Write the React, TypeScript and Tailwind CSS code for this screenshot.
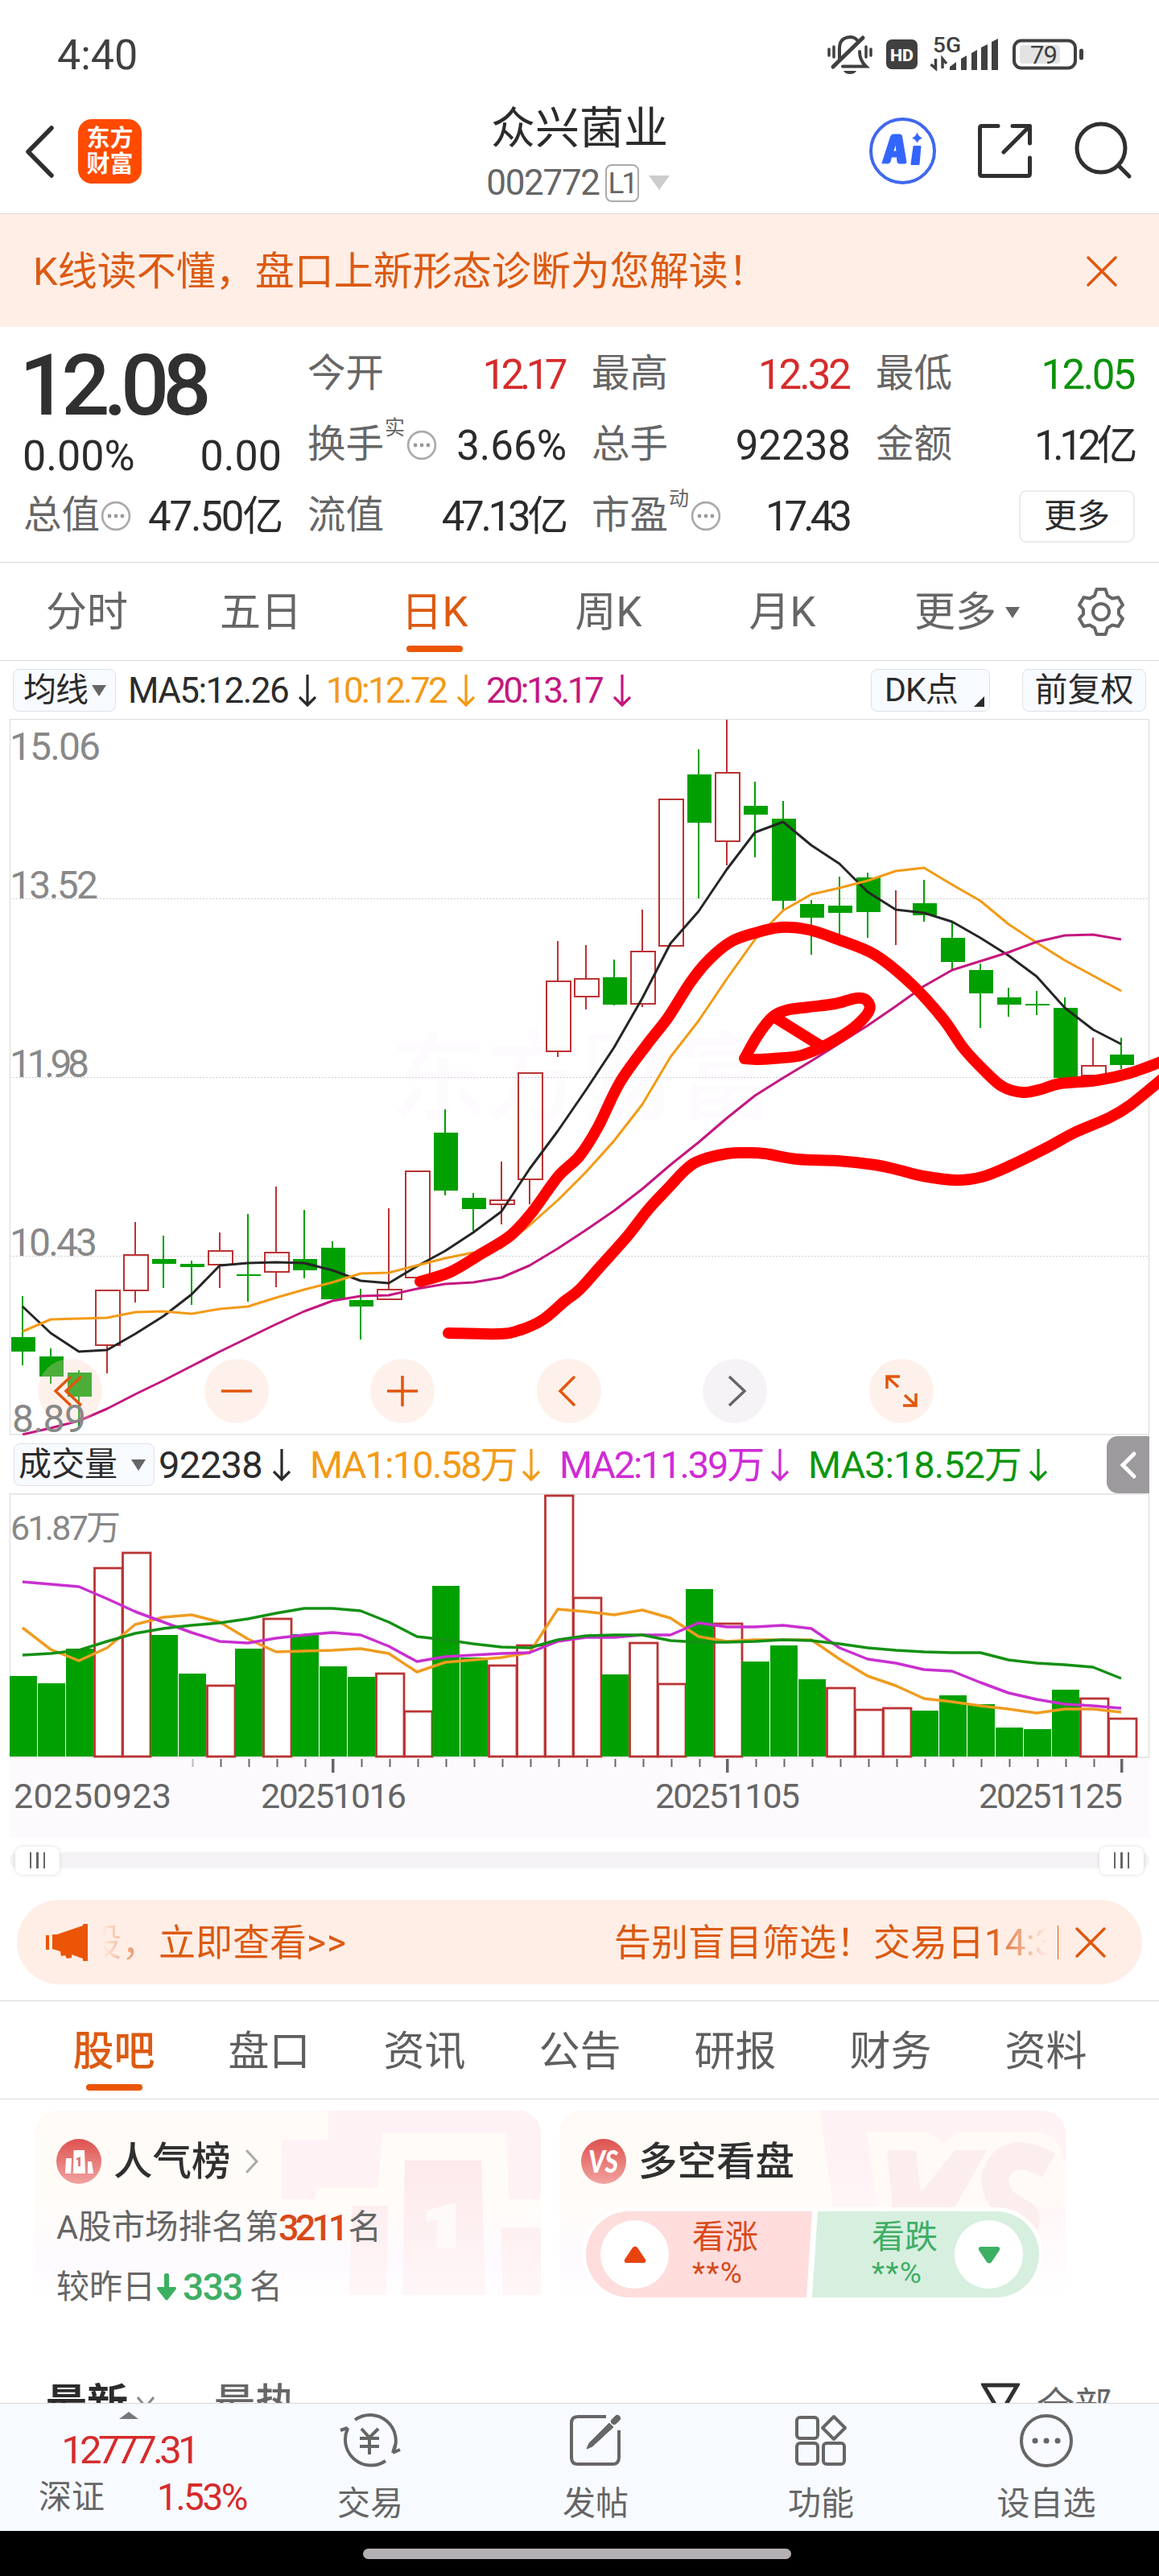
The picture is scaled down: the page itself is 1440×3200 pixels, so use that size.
import type { ReactNode } from "react";

type Candle = [high: number, top: number, bottom: number, low: number, up: 0 | 1];

const STEP = 35;
const FIRST_X = 28;
const FONT = "Roboto, 'Noto Sans CJK SC', sans-serif";

const candles: Candle[] = [
  [1610, 1661, 1679, 1696, 0],
  [1675, 1685, 1710, 1719, 0],
  [1702, 1705, 1735, 1773, 0],
  [1603, 1603, 1671, 1706, 1],
  [1518, 1559, 1603, 1618, 1],
  [1535, 1564, 1570, 1600, 0],
  [1566, 1570, 1574, 1621, 0],
  [1531, 1554, 1571, 1600, 1],
  [1508, 1583, 1585, 1617, 0],
  [1474, 1556, 1580, 1599, 1],
  [1503, 1564, 1578, 1588, 0],
  [1542, 1550, 1614, 1614, 0],
  [1601, 1615, 1623, 1664, 0],
  [1501, 1602, 1614, 1614, 1],
  [1455, 1455, 1587, 1587, 1],
  [1378, 1407, 1479, 1485, 0],
  [1482, 1488, 1502, 1529, 0],
  [1443, 1491, 1496, 1521, 1],
  [1333, 1333, 1465, 1496, 1],
  [1169, 1219, 1306, 1313, 1],
  [1174, 1216, 1238, 1254, 1],
  [1192, 1214, 1248, 1249, 0],
  [1130, 1182, 1247, 1251, 1],
  [993, 993, 1175, 1175, 1],
  [931, 962, 1022, 1116, 0],
  [894, 960, 1045, 1075, 1],
  [971, 1001, 1012, 1065, 0],
  [995, 1017, 1119, 1130, 0],
  [1118, 1123, 1140, 1186, 0],
  [1089, 1125, 1134, 1162, 0],
  [1084, 1090, 1133, 1165, 0],
  [1106, 1126, 1126, 1174, 1],
  [1093, 1122, 1137, 1145, 0],
  [1145, 1165, 1195, 1205, 0],
  [1197, 1205, 1234, 1277, 0],
  [1227, 1239, 1248, 1263, 0],
  [1231, 1247, 1249, 1261, 0],
  [1239, 1252, 1339, 1339, 0],
  [1289, 1324, 1336, 1350, 1],
  [1289, 1310, 1323, 1328, 0],
];

const ma5 = [1623, 1656, 1679, 1677, 1657, 1635, 1608, 1572, 1569, 1568, 1569, 1578, 1591, 1594, 1573, 1554, 1531, 1505, 1452, 1405, 1354, 1301, 1240, 1172, 1132, 1080, 1034, 1021, 1050, 1073, 1108, 1130, 1134, 1145, 1165, 1187, 1213, 1252, 1279, 1297];
const ma10 = [1654, 1639, 1638, 1637, 1630, 1629, 1632, 1626, 1623, 1612, 1602, 1593, 1582, 1581, 1572, 1563, 1556, 1550, 1522, 1491, 1456, 1417, 1372, 1313, 1268, 1216, 1167, 1131, 1111, 1103, 1094, 1082, 1078, 1099, 1119, 1148, 1171, 1193, 1212, 1231];
const ma20 = [1782, 1774, 1765, 1750, 1732, 1715, 1697, 1679, 1662, 1645, 1629, 1616, 1610, 1609, 1601, 1595, 1593, 1587, 1572, 1551, 1528, 1504, 1477, 1447, 1419, 1389, 1361, 1339, 1318, 1296, 1274, 1250, 1225, 1205, 1194, 1183, 1170, 1162, 1161, 1167];

const volumes = [2082, 2091, 2048, 1947, 1928, 2031, 2079, 2093, 2048, 2010, 2030, 2070, 2083, 2078, 2125, 1970, 2059, 2068, 2043, 1857, 1984, 2080, 2040, 2091, 1974, 2016, 2064, 2044, 2086, 2096, 2123, 2121, 2125, 2106, 2117, 2146, 2148, 2099, 2109, 2134];
const volumeUp = [3, 4, 7, 9, 13, 14, 17, 18, 19, 20, 22, 23, 25, 29, 30, 31, 38, 39];
const vol5 = [2022, 2049, 2063, 2047, 2018, 2009, 2006, 2015, 2036, 2052, 2051, 2050, 2048, 2054, 2077, 2065, 2062, 2059, 2053, 1999, 2002, 2006, 2000, 2010, 2033, 2039, 2037, 2037, 2037, 2061, 2082, 2094, 2110, 2114, 2119, 2123, 2128, 2123, 2123, 2127];
const vol10 = [1965, 1968, 1971, 1986, 2002, 2015, 2028, 2039, 2041, 2035, 2031, 2028, 2031, 2045, 2064, 2058, 2056, 2054, 2053, 2039, 2034, 2034, 2031, 2031, 2016, 2021, 2021, 2019, 2023, 2047, 2061, 2066, 2074, 2076, 2090, 2103, 2111, 2117, 2119, 2122];
const vol20 = [2056, 2054, 2050, 2039, 2029, 2023, 2019, 2016, 2011, 2004, 1998, 1998, 2001, 2015, 2033, 2037, 2042, 2046, 2047, 2037, 2032, 2031, 2031, 2038, 2040, 2040, 2039, 2037, 2038, 2042, 2047, 2050, 2052, 2053, 2053, 2062, 2066, 2068, 2071, 2085];

const upperStroke = [[522, 1592], [560, 1580], [597, 1558], [634, 1535], [661, 1506], [693, 1462], [720, 1436], [743, 1400], [770, 1345], [805, 1296], [830, 1264], [858, 1220], [881, 1192], [908, 1170], [938, 1159], [970, 1152], [1005, 1155], [1041, 1167], [1087, 1186], [1133, 1223], [1172, 1266], [1197, 1302], [1223, 1330], [1246, 1350], [1271, 1357], [1294, 1353], [1317, 1346], [1363, 1342], [1404, 1333], [1448, 1317]];
const lowerStroke = [[557, 1656], [620, 1657], [647, 1652], [675, 1639], [702, 1616], [720, 1602], [747, 1572], [780, 1535], [805, 1503], [830, 1476], [853, 1452], [871, 1441], [904, 1433], [927, 1432], [950, 1433], [991, 1440], [1041, 1442], [1087, 1447], [1115, 1453], [1147, 1461], [1188, 1466], [1220, 1462], [1253, 1449], [1298, 1427], [1335, 1407], [1377, 1389], [1404, 1373], [1448, 1337]];
const loopStroke = [[925, 1315], [941, 1287], [959, 1264], [977, 1255], [1005, 1251], [1037, 1247], [1064, 1240], [1077, 1243], [1080, 1255], [1065, 1273], [1041, 1290], [1014, 1304], [991, 1312], [960, 1315], [941, 1316], [925, 1315]];

const line = (ys: number[]) => ys.map((y, i) => `${FIRST_X + i * STEP},${y}`).join(" ");

// Catmull-Rom through the points, written as cubic segments
const smooth = (p: number[][]) => {
  let d = `M${p[0][0]} ${p[0][1]}`;
  for (let i = 0; i < p.length - 1; i++) {
    const a = p[i - 1] ?? p[i];
    const b = p[i];
    const c = p[i + 1];
    const e = p[i + 2] ?? c;
    d += `C${b[0] + (c[0] - a[0]) / 6} ${b[1] + (c[1] - a[1]) / 6} ${c[0] - (e[0] - b[0]) / 6} ${c[1] - (e[1] - b[1]) / 6} ${c[0]} ${c[1]}`;
  }
  return d;
};

const StatusBar = () => (
  <div className="flex h-[110px] items-center pl-[71px] pt-[28px] text-[#404040]">
    <span className="w-[957px] text-[52px] leading-none">4:40</span>
    <svg width="320" height="60" viewBox="1028 39 320 60" fill="none" stroke="#404040" strokeWidth="4" strokeLinecap="round">
      {/* muted bell */}
      <path d="M1030 61v8M1036 58v13M1076 58v13M1082 61v8" strokeWidth="3.5" />
      <path d="M1043 73V60q0-13 13-14q6 0 9 4M1068 64q0 11 8 18.500H1047" />
      <path d="M1035 83L1072 47" strokeWidth="5" />
      <path d="M1048 88h16q-2 4-8 4t-8-4Z" fill="#404040" stroke="none" />
      <rect x="1101" y="49" width="39" height="37" rx="7" fill="#404040" stroke="none" />
      <text x="1106" y="75.500" fontSize="20" fontWeight="800" fill="#fff" stroke="none" textLength="29" lengthAdjust="spacingAndGlyphs">HD</text>
      <text x="1159" y="65" fontSize="26" fontWeight="500" fill="#404040" stroke="none" textLength="35" lengthAdjust="spacingAndGlyphs">5G</text>
      <path d="M1162.500 73v12l-6-5M1171 85v-12l5 6" strokeWidth="3.500" strokeLinecap="butt" />
      <g fill="#404040" stroke="none">
        <path d="M1180 87v-4l8-6v10ZM1194 87V73l7-4v18ZM1207 87V66l7-4v25ZM1219 87V59l8-4v32ZM1232 87V52l8-4v39Z" />
      </g>
      <rect x="1260" y="50.500" width="76" height="34" rx="9" />
      <rect x="1267" y="56" width="50" height="23" rx="4" fill="#e3e3e3" stroke="none" />
      <text x="1280" y="79" fontSize="31" fill="#404040" stroke="none" textLength="34">79</text>
      <path d="M1343.500 63v9" strokeWidth="5" />
    </svg>
  </div>
);

const Header = () => (
  <header className="relative flex h-[156px] items-center border-b border-[#ddd8d8] text-[#2b2b2b]">
    <svg width="40" height="70" viewBox="31 152 40 70" className="ml-[30px]" fill="none" stroke="#2f2f2f" strokeWidth="5.500" strokeLinecap="round" strokeLinejoin="round">
      <path d="M65 158L36 187.500L65 217" />
    </svg>
    <div className="ml-[27px] flex h-[80px] w-[79px] flex-col items-center justify-center rounded-[17px] bg-[#ff4a00] text-[29px] font-bold leading-[32px] text-white">
      <span>东方</span>
      <span>财富</span>
    </div>
    <div className="absolute inset-x-0 top-[19px] flex flex-col items-center">
      <span className="text-[55px] leading-[60px]">众兴菌业</span>
      <div className="-ml-[4px] mt-[14px] flex h-[48px] items-center text-[#666]">
        <span className="text-[44px] leading-none tracking-[-1.300px]">002772</span>
        <span className="ml-[7px] flex h-[47px] w-[42px] items-center justify-center rounded-[8px] border-2 border-[#aaa] text-[37px] leading-none tracking-[-3px]">L1</span>
        <span className="ml-[12px] h-0 w-0 border-x-[13px] border-t-[18px] border-x-transparent border-t-[#ccc]" />
      </div>
    </div>
    <svg width="330" height="100" viewBox="1079 137 330 100" className="ml-auto mr-[31px]" fill="none" strokeLinecap="round" strokeLinejoin="round">
      <circle cx="1121.500" cy="186.500" r="39.500" stroke="#4068ee" strokeWidth="4" />
      <path d="M1096 201.500L1107 167.500Q1108 166 1110 166H1118Q1120 166 1120.500 168L1126 200.500Q1126 202 1124 202H1117Q1115.500 202 1115 200L1114.500 194H1107.500L1106 200Q1105.500 202 1103 202ZM1110 187H1114L1113 178Z" fill="#3366ff" fillRule="evenodd" stroke="#3366ff" />
      <path d="M1135.500 181H1143.500L1141.500 203H1132.500Z" fill="#3366ff" stroke="#3366ff" strokeWidth="2" />
      <path d="M1139.500 163.500Q1141.500 169 1146 170.500Q1141.500 172 1139.500 176.500Q1137.500 172 1133 170.500Q1137.500 169 1139.500 163.500Z" fill="#3366ff" />
      <g stroke="#303030" strokeWidth="5">
        <path d="M1240 155.500H1220Q1217.500 155.500 1217.500 158V215Q1217.500 217.500 1220 217.500H1277Q1279.500 217.500 1279.500 215V195" />
        <path d="M1258 155.500H1279.500V177M1279 156L1247 188" />
        <circle cx="1368" cy="183" r="30" />
        <path d="M1390 205L1403 218" />
      </g>
    </svg>
  </header>
);

const Close = () => (
  <svg width="40" height="40" viewBox="0 0 40 40" stroke="#e2560c" strokeWidth="3.500" strokeLinecap="round">
    <path d="M3 3L37 37M37 3L3 37" />
  </svg>
);

const Banner = () => (
  <div className="flex h-[140px] items-center justify-between bg-[#feeee6] pl-[41px] pr-[51px] pt-[2px] text-[#dc5a12]">
    <span className="text-[49px] leading-none">K线读不懂，盘口上新形态诊断为您解读！</span>
    <Close />
  </div>
);

const Info = () => (
  <svg width="38" height="38" viewBox="0 0 36 36" fill="#999">
    <circle cx="18" cy="18" r="16" fill="none" stroke="#aaa" strokeWidth="2.500" />
    <circle cx="10.500" cy="18" r="2.300" />
    <circle cx="18" cy="18" r="2.300" />
    <circle cx="25.500" cy="18" r="2.300" />
  </svg>
);

type StatProps = { label: string; value?: string; color?: string; fit?: string; sup?: string; info?: boolean };

const Stat = ({ label, value, color = "text-[#2b2b2b]", fit = "tracking-normal", sup, info }: StatProps) => (
  <div className="flex h-[88px] items-center whitespace-nowrap leading-none">
    <span className="text-[47.500px] text-[#666]">{label}</span>
    {sup && <span className="ml-px mb-[44px] text-[25px] text-[#666]">{sup}</span>}
    {info && <span className={sup ? "ml-[2px]" : "ml-px"}><Info /></span>}
    {value && <span className={`ml-auto text-[51px] ${fit} ${color}`}>{value}</span>}
  </div>
);

const Quote = () => (
  <section className="flex h-[293px] border-b border-[#d9d9d9] pl-[31px] pt-[15px]">
    <div className="w-[319px]">
      <div className="-ml-[7px] flex h-[115px] items-center text-[106px] font-medium leading-none tracking-[-8px] text-[#303030]">12.08</div>
      <div className="-ml-[3px] flex h-[61px] items-center justify-between text-[52px] leading-none text-[#2b2b2b]">
        <span>0.00%</span>
        <span>0.00</span>
      </div>
      <div className="-ml-[2px]">
        <Stat label="总值" info value="47.50亿" fit="tracking-[-2.200px]" />
      </div>
    </div>
    <div className="ml-[32px] w-[322px]">
      <Stat label="今开" value="12.17" color="text-[#d62b2b]" fit="mr-[4px] tracking-[-5.500px]" />
      <Stat label="换手" sup="实" info value="3.66%" />
      <Stat label="流值" value="47.13亿" fit="mr-[2px] tracking-[-4.300px]" />
    </div>
    <div className="ml-[31px] w-[322px]">
      <Stat label="最高" value="12.32" color="text-[#d62b2b]" fit="mr-[2px] tracking-[-3px]" />
      <Stat label="总手" value="92238" />
      <Stat label="市盈" sup="动" info value="17.43" fit="mr-[3px] tracking-[-5px]" />
    </div>
    <div className="ml-[31px] w-[322px]">
      <Stat label="最低" value="12.05" color="text-[#0b930b]" fit="mr-px tracking-[-2.500px]" />
      <Stat label="金额" value="1.12亿" fit="mr-[2px] tracking-[-5.500px]" />
      <div className="flex h-[88px] items-center justify-end">
        <span className="flex h-[65px] w-[144px] items-center justify-center rounded-[9px] border-2 border-[#ececec] text-[41px] leading-none text-[#2b2b2b]">更多</span>
      </div>
    </div>
  </section>
);

const Triangle = ({ className = "" }: { className?: string }) => (
  <span className={`h-0 w-0 border-x-[9px] border-t-[14px] border-x-transparent border-t-[#666] ${className}`} />
);

const PeriodTabs = () => (
  <nav className="flex h-[122px] items-center border-b border-[#d9d9d9] text-[51px] leading-none text-[#666]">
    {["分时", "五日", "日K", "周K", "月K"].map((t) => (
      <div key={t} className={`relative flex h-full w-[216px] items-center justify-center pt-[2px] ${t === "日K" ? "text-[#dc5a12]" : ""}`}>
        {t}
        {t === "日K" && <span className="absolute bottom-[10px] h-[8px] w-[70px] rounded-full bg-[#eb5505]" />}
      </div>
    ))}
    <div className="ml-[56px] flex w-[160px] items-center pt-[2px]">
      更多
      <Triangle className="ml-[11px]" />
    </div>
    <svg width="62" height="62" viewBox="-31 -31 62 62" className="ml-[41px]" fill="none" stroke="#666" strokeWidth="4" strokeLinejoin="round">
      <path d="M-5.500 -28H5.500L8 -20L14 -16.500L21.500 -18L27 -8.500L22 -3V3L27 8.500L21.500 18L14 16.500L8 20L5.500 28H-5.500L-8 20L-14 16.500L-21.500 18L-27 8.500L-22 3V-3L-27 -8.500L-21.500 -18L-14 -16.500L-8 -20Z" />
      <circle r="10" />
    </svg>
  </nav>
);

const Down = ({ className = "" }: { className?: string }) => (
  <svg width="22" height="40" viewBox="0 0 22 40" fill="none" stroke="currentColor" strokeWidth="3.200" className={`shrink-0 ${className}`}>
    <path d="M11 0V38M1 28L11 38L21 28" />
  </svg>
);

const Chip = ({ className, children }: { className: string; children: ReactNode }) => (
  <span className={`flex h-[53px] shrink-0 items-center rounded-[8px] border-[1.500px] border-[#dfe1e8] bg-[#f7faff] text-[41px] leading-none text-[#2b2b2b] ${className}`}>
    {children}
  </span>
);

const AverageRow = () => (
  <div className="flex h-[73px] items-center whitespace-nowrap pt-[2px] text-[44px] leading-none tracking-[-1.600px] text-[#2b2b2b]">
    <Chip className="ml-[16px] w-[128px] pl-[12px] tracking-[-1px]">
      均线
      <Triangle className="ml-[5px]" />
    </Chip>
    <span className="ml-[15px] w-[212px]">MA5:12.26</span>
    <Down />
    <span className="ml-[12px] w-[163px] tracking-[-2.700px] text-[#f39a16]">10:12.72</span>
    <Down className="text-[#f39a16]" />
    <span className="ml-[14px] w-[158px] tracking-[-3.400px] text-[#c4177f]">20:13.17</span>
    <Down className="text-[#c4177f]" />
    <Chip className="relative ml-auto w-[148px] pl-[16px] tracking-[-1px]">
      DK点
      <span className="absolute bottom-[5px] right-[6px] h-0 w-0 border-b-[13px] border-l-[13px] border-b-[#2b2b2b] border-l-transparent" />
    </Chip>
    <Chip className="ml-[40px] mr-[16px] w-[154px] justify-center tracking-normal">前复权</Chip>
  </div>
);

const CandleChart = () => (
  <svg width="1440" height="890" viewBox="0 893 1440 890" className="block" fontFamily={FONT}>
    <g fontSize="120" fontWeight="500" fill="#fefbfe">
      <text x="485" y="1382">东</text>
      <text x="603" y="1382">方</text>
      <text x="722" y="1382">财</text>
      <text x="843" y="1382">富</text>
    </g>
    <g stroke="#cfcfcf" strokeWidth="1" strokeDasharray="2 2">
      <path d="M12 1116.500H1428M12 1338.500H1428M12 1560.500H1428" />
    </g>
    <rect x="12.500" y="893.500" width="1415" height="888.500" fill="none" stroke="#e1e1e1" strokeWidth="1.500" />
    {candles.map(([high, top, bottom, low, up], i) => {
      const x = FIRST_X + i * STEP;
      return up ? (
        <g key={i} stroke="#bb3333" strokeWidth="2" fill="none">
          <path d={`M${x} ${high}V${top}M${x} ${bottom}V${low}`} />
          <rect x={x - 14} y={top} width="30" height={bottom - top} />
        </g>
      ) : (
        <g key={i} fill="#00a000">
          <rect x={x - 1} y={high} width="2" height={low - high} />
          <rect x={x - 14} y={top} width="30" height={bottom - top} />
        </g>
      );
    })}
    <g fill="none" strokeWidth="3" strokeLinejoin="round">
      <polyline points={line(ma5)} stroke="#262626" />
      <polyline points={line(ma10)} stroke="#f39a16" />
      <polyline points={line(ma20)} stroke="#c4177f" />
    </g>
  </svg>
);

// price scale, drawn over the round buttons
const PriceLabels = () => (
  <svg width="140" height="890" viewBox="0 893 140 890" className="absolute left-0 top-0" fontFamily={FONT} fontSize="48" fill="#888">
    <text x="12" y="944" textLength="113">15.06</text>
    <text x="12" y="1116" textLength="110">13.52</text>
    <text x="12" y="1338" textLength="99">11.98</text>
    <text x="12" y="1560" textLength="109">10.43</text>
    <text x="15" y="1779" textLength="92">8.89</text>
  </svg>
);

const Drawing = () => (
  <svg width="1440" height="890" viewBox="0 893 1440 890" className="absolute left-0 top-0" fill="none" stroke="#fe0000" strokeWidth="14" strokeLinecap="round" strokeLinejoin="round">
    <path d={smooth(upperStroke)} />
    <path d={smooth(lowerStroke)} />
    <path d={smooth(loopStroke)} />
    <path d="M963 1264L1021 1300" />
  </svg>
);

const chartButtons = [
  { key: "first", d: "M55 22L36 40L55 58M68 22L49 40L68 58" },
  { key: "out", d: "M21 40H59" },
  { key: "in", d: "M21 40H59M40 21V59" },
  { key: "prev", d: "M47 22L29 40L47 58" },
  { key: "next", d: "M33 22L52 40L33 58" },
  { key: "full", d: "M22 37V22H38M22 22L36 35M58 43V58H42M58 58L44 45" },
];

const ChartButtons = () => (
  <div className="absolute left-[47px] top-[795px] flex gap-[126.500px]">
    {chartButtons.map(({ key, d }) => (
      <span key={key} className={`h-[80px] w-[80px] rounded-full ${key === "next" ? "bg-[#f6f3f7]" : "bg-[#fbd2bd]/30"}`}>
        <svg width="80" height="80" viewBox="0 0 80 80" fill="none" stroke={key === "next" ? "#666" : "#e2560c"} strokeWidth="3.500">
          <path d={d} transform={key === "first" ? "translate(-14 0)" : undefined} />
        </svg>
      </span>
    ))}
  </div>
);

const VolumeRow = () => (
  <div className="flex h-[72px] items-center whitespace-nowrap pt-px text-[47px] leading-none tracking-[-1.800px] text-[#2b2b2b]">
    <Chip className="ml-[17px] w-[175px] pl-[5px] tracking-normal">
      成交量
      <Triangle className="ml-[17px]" />
    </Chip>
    <span className="ml-[5px] w-[142px] tracking-[-0.600px]">92238</span>
    <Down />
    <span className="ml-[24px] w-[264px] text-[#f39a16]">MA1:10.58万</span>
    <Down className="text-[#f39a16]" />
    <span className="ml-[24px] w-[263px] tracking-[-2.200px] text-[#cf2bd6]">MA2:11.39万</span>
    <Down className="text-[#cf2bd6]" />
    <span className="ml-[24px] w-[275px] tracking-[-1px] text-[#0c960c]">MA3:18.52万</span>
    <Down className="text-[#0c960c]" />
    <span className="ml-auto mr-[12px] flex h-[71px] w-[53px] items-center justify-center rounded-l-[14px] bg-[#9c9a9c]">
      <svg width="22" height="36" viewBox="0 0 22 36" fill="none" stroke="#fff" strokeWidth="5" strokeLinecap="round">
        <path d="M18 4L4 18L18 32" />
      </svg>
    </span>
  </div>
);

const VolumeChart = () => (
  <svg width="1440" height="428" viewBox="0 1855 1440 428" className="block" fontFamily={FONT}>
    <rect x="12" y="2184" width="1416" height="99" fill="#fdfafd" />
    <rect x="12.500" y="1856" width="1415" height="327" fill="none" stroke="#e1e1e1" strokeWidth="1.500" />
    <text x="13" y="1913" fontSize="43" fill="#888" textLength="137">61.87万</text>
    {volumes.map((y, i) => {
      const x = 12 + i * STEP;
      return volumeUp.includes(i) ? (
        <rect key={i} x={x + 0.5} y={y + 1} width="34.500" height={2181 - y} fill="none" stroke="#bb3333" strokeWidth="2.800" />
      ) : (
        <rect key={i} x={x} y={y} width="34" height={2182 - y} fill="#00a000" />
      );
    })}
    <g fill="none" strokeWidth="3.500" strokeLinejoin="round">
      <polyline points={line(vol5)} stroke="#ef9c20" />
      <polyline points={line(vol10)} stroke="#c92fd0" />
      <polyline points={line(vol20)} stroke="#149014" />
    </g>
    {volumes.map((_, i) => {
      const major = i === 11 || i === 25 || i === 39;
      if (i < 6) return null;
      return <rect key={i} x={FIRST_X + i * STEP + (major ? -1 : 0.5)} y="2185" width={major ? 3.5 : 2} height={major ? 17 : 10} fill={i === 6 ? "#bbb" : "#666"} />;
    })}
    <g fontSize="43" fill="#666">
      <text x="17" y="2245.500" textLength="196">20250923</text>
      <text x="324" y="2245.500" textLength="181">20251016</text>
      <text x="814" y="2245.500" textLength="180">20251105</text>
      <text x="1216" y="2245.500" textLength="179">20251125</text>
    </g>
  </svg>
);

const Handle = () => (
  <span className="flex h-[35px] w-[55px] items-center justify-center gap-[6px] rounded-[9px] bg-white shadow-[0_0_5px_rgba(0,0,0,0.15)]">
    {[0, 1, 2].map((i) => (
      <i key={i} className="h-[20px] w-[2.500px] bg-[#666]" />
    ))}
  </span>
);

const RangeSlider = () => (
  <div className="flex h-[77px] items-start px-[12px] pt-[18px]">
    <div className="flex h-[20px] w-full items-center justify-between rounded-full bg-[#f6f3f7] px-[7px]">
      <Handle />
      <Handle />
    </div>
  </div>
);

const Notice = () => (
  <div className="mx-[21px] flex h-[105px] items-center rounded-full bg-[#feeee6] pl-[35px] pr-[44px] text-[#dc5a12]">
    <svg width="54" height="48" viewBox="56 2388 54 48" fill="#eb5505">
      <path d="M57 2403H61V2421H57ZM65 2402H71L103 2391V2389H109V2435H103V2432L89 2427V2431L83 2432L81 2428L76 2429L75 2423L65 2420Z" />
    </svg>
    <div className="ml-[17px] flex w-[1174px] overflow-hidden whitespace-nowrap text-[46px] leading-[60px] [mask-image:linear-gradient(90deg,transparent,black_70px,black_calc(100%-70px),transparent)]">
      <span className="-ml-[22px] w-[658px] shrink-0">股，立即查看<span className="tracking-[1px]">&gt;&gt;</span></span>
      <span className="shrink-0">告别盲目筛选！交易日14:30</span>
    </div>
    <i className="ml-[13px] mr-[20px] h-[42px] w-[1.500px] shrink-0 bg-[#e2560c]" />
    <div className="shrink-0"><Close /></div>
  </div>
);

const SectionTabs = () => (
  <nav className="mt-[20px] flex h-[123px] items-center border-y border-[#d9d9d9] pl-[45px] text-[51px] leading-none text-[#5f5f5f]">
    {["股吧", "盘口", "资讯", "公告", "研报", "财务", "资料"].map((t, i) => (
      <div key={t} className={`relative flex h-full w-[193px] items-center justify-center pt-[4px] ${i === 0 ? "font-medium text-[#dc5a12]" : ""}`}>
        {t}
        {i === 0 && <span className="absolute bottom-[10px] h-[8px] w-[70px] rounded-full bg-[#eb5505]" />}
      </div>
    ))}
  </nav>
);

const RankCard = () => (
  <div className="relative h-[278px] w-[629px] overflow-hidden rounded-[28px] bg-[linear-gradient(180deg,#fffaf6_0%,#fffcf8_40%,#fdfaff_68%,#ffffff_84%)]">
    <svg width="629" height="278" viewBox="43 2622 629 278" className="absolute inset-0">
      <defs>
        <linearGradient id="rank" x1="0" y1="0" x2="0" y2="1">
          <stop offset="0" stopColor="#fdeaea" />
          <stop offset="1" stopColor="#fff6f8" />
        </linearGradient>
      </defs>
      <path d="M350 2658H408V2622H672V2732H632L629 2650H475L470 2718H394L391 2732H350Z" fill="#fff2f5" />
      <path d="M503 2684H598L603 2851H500ZM438 2740H482L480 2851H433ZM622 2767H672V2851H625Z" fill="url(#rank)" />
      <path d="M530 2746L566 2736V2792H543V2758L530 2760Z" fill="#fffafa" />
    </svg>
    <div className="relative pl-[27px] pt-[35px] leading-none">
      <div className="flex h-[56px] items-center">
        <svg width="56" height="56" viewBox="0 0 56 56">
          <defs>
            <linearGradient id="dot" x1="0" y1="0" x2="0" y2="1">
              <stop offset="0" stopColor="#dd524f" />
              <stop offset="1" stopColor="#f2a3a0" />
            </linearGradient>
          </defs>
          <circle cx="28" cy="28" r="28" fill="url(#dot)" />
          <path d="M12 24H19L18 43H11ZM21.500 14H35L36 43H21ZM39 28H44L46 43H39Z" fill="#fff" />
          <path d="M25 24L30 22V34H27V26L25 26.500Z" fill="#e27a77" />
        </svg>
        <span className="ml-[15px] pt-[3px] text-[48.500px] font-medium text-[#303030]">人气榜</span>
        <svg width="18" height="30" viewBox="0 0 18 30" className="ml-[17px]" fill="none" stroke="#aaa" strokeWidth="3" strokeLinecap="round">
          <path d="M3 2L15 15L3 28" />
        </svg>
      </div>
      <div className="mt-[29px] flex h-[50px] items-center text-[41.500px] text-[#666]">
        A股市场排名第<span className="mr-[4px] text-[45px] font-medium tracking-[-5px] text-[#d84a1a]">3211</span>名
      </div>
      <div className="mt-[24px] flex h-[50px] items-center text-[41px] text-[#666]">
        较昨日
        <svg width="26" height="34" viewBox="0 0 26 34" className="ml-[1px]" fill="#3cb062">
          <path d="M10 2q0-2 3-2t3 2V17H23q3 0 1.500 3L15 32q-2 3-4 0L1.500 20Q0 17 3 17H10Z" />
        </svg>
        <span className="ml-[7px] mr-[9px] text-[46px] font-medium tracking-[-1.500px] text-[#3fae66]">333</span>
        名
      </div>
    </div>
  </div>
);

const VsCard = () => (
  <div className="relative h-[278px] w-[629px] overflow-hidden rounded-[28px] bg-[linear-gradient(180deg,#fffaf6_0%,#fffcf8_40%,#fdfaff_68%,#ffffff_84%)]">
    <svg width="629" height="278" viewBox="695 2622 629 278" className="absolute inset-0">
      <defs>
        <linearGradient id="versus" x1="0" y1="0" x2="0" y2="1">
          <stop offset="0.300" stopColor="#fff2f4" />
          <stop offset="1" stopColor="#ffffff" />
        </linearGradient>
      </defs>
      <path d="M1019 2622H1324V2855H1050Z" fill="url(#versus)" />
      <path d="M1077 2648H1153L1172 2662L1192 2648H1290Q1318 2652 1324 2690V2742H1090Z" fill="#fffaf6" />
      <path d="M1102 2671H1138L1144 2724L1186 2671H1226L1160 2790H1113Z" fill="#fdeeee" />
      <path d="M1303 2690Q1250 2660 1236 2705Q1236 2735 1268 2748Q1290 2760 1240 2790" fill="none" stroke="#fdeeee" strokeWidth="34" />
    </svg>
    <div className="relative mt-[35px] flex h-[56px] items-center pl-[27px] leading-none">
      <svg width="56" height="56" viewBox="0 0 56 56" fontFamily="Lato, sans-serif">
        <circle cx="28" cy="28" r="28" fill="url(#dot)" />
        <text x="9" y="42" fontSize="37" fontWeight="900" fontStyle="italic" fill="#fff" textLength="37" lengthAdjust="spacingAndGlyphs">VS</text>
      </svg>
      <span className="ml-[15px] pt-[3px] text-[48.500px] font-medium text-[#303030]">多空看盘</span>
    </div>
    <div className="relative ml-[28px] mt-[29px] flex h-[117px] w-[573px] items-center overflow-hidden rounded-full border-[5px] border-white bg-white leading-none">
      <svg width="563" height="107" viewBox="0 0 563 107" className="absolute inset-0">
        <path d="M0 0H281L274 107H0Z" fill="#fedddc" />
        <path d="M288 0H563V107H281Z" fill="#d7efdf" />
      </svg>
      <span className="relative ml-[18px] flex h-[85px] w-[85px] items-center justify-center rounded-full bg-white">
        <svg width="28" height="22" viewBox="0 0 28 22" fill="#e8420f"><path d="M11 2q3-3 6 0L27 17q1 4-3 4H4q-4 0-3-4Z" /></svg>
      </span>
      <span className="relative ml-[29px] w-[223px] text-[#d84a1a]">
        <b className="block text-[41px] font-normal">看涨</b>
        <b className="mt-[5px] block text-[37px] font-normal tracking-[1.500px]">**%</b>
      </span>
      <span className="relative w-[103px] text-[#3fae66]">
        <b className="block text-[41px] font-normal">看跌</b>
        <b className="mt-[5px] block text-[37px] font-normal tracking-[1.500px]">**%</b>
      </span>
      <span className="relative flex h-[85px] w-[85px] items-center justify-center rounded-full bg-white">
        <svg width="28" height="22" viewBox="0 0 28 22" fill="#3cb062"><path d="M11 20q3 3 6 0L27 5q1-4-3-4H4Q0 1 1 5Z" /></svg>
      </span>
    </div>
  </div>
);

const FeedHeader = () => (
  <div className="flex h-[25px] items-start overflow-hidden whitespace-nowrap pl-[57px] text-[51px] leading-[54px] text-[#666]">
    <span className="font-bold text-[#2b2b2b]">最新</span>
    <svg width="26" height="30" viewBox="0 0 26 30" className="ml-[10px] mt-[14px]" fill="none" stroke="#888" strokeWidth="3"><path d="M2 4L12 16L22 4" /></svg>
    <span className="ml-[71px] font-medium">最热</span>
    <svg width="48" height="50" viewBox="0 0 48 50" className="ml-auto" fill="none" stroke="#303030" strokeWidth="5"><path d="M3 3H45L29 30V46H19V30Z" /></svg>
    <span className="ml-[21px] mr-[58px] pt-[2px] text-[47px]">全部</span>
  </div>
);

const navItems = [
  {
    label: "交易",
    icon: (
      <>
        <path d="M17 10A32 32 0 0 1 64 51M64 51L73 47M64 51L67 41M55 61A32 32 0 0 1 8 21M8 20L-1 23M8 20L5 30" />
        <path d="M25 21L35 32L46 21M23 33H47M23 43H47M35 32V53" />
      </>
    ),
  },
  {
    label: "发帖",
    icon: (
      <>
        <path d="M49 6H14Q6 6 6 14V57Q6 65 14 65H57Q65 65 65 57V23" />
        <path d="M59 12L63 8" strokeWidth="8" strokeLinecap="round" />
        <path d="M53 14L58 19L32 43L25 46L28 39Z" fill="#666" strokeWidth="1" />
      </>
    ),
  },
  {
    label: "功能",
    icon: (
      <>
        <rect x="6" y="7" width="26" height="26" rx="4" />
        <rect x="6" y="39" width="26" height="26" rx="4" />
        <rect x="39" y="39" width="26" height="26" rx="4" />
        <path d="M52 6L66 20L52 34L38 20Z" strokeLinejoin="round" />
      </>
    ),
  },
  {
    label: "设自选",
    icon: (
      <>
        <circle cx="36" cy="36" r="31" />
        <path d="M22 36h.1M36 36h.1M50 36h.1" strokeWidth="7" strokeLinecap="round" />
      </>
    ),
  },
];

const BottomNav = () => (
  <div className="flex h-[159px] border-t border-[#d5d7dc] bg-[#f7faff] leading-none text-[#666]">
    <div className="flex w-[320px] flex-col items-center pt-[10px]">
      <span className="h-0 w-0 border-x-[12px] border-b-[9px] border-x-transparent border-b-[#777]" />
      <span className="mt-[14px] text-[49px] tracking-[-4.800px] text-[#d62b2b]">12777.31</span>
      <div className="ml-[34px] mt-[11px] flex w-[258px] items-center justify-between text-[41px]">
        深证
        <span className="text-[46px] tracking-[-2.500px] text-[#d62b2b]">1.53%</span>
      </div>
    </div>
    {navItems.map(({ label, icon }) => (
      <div key={label} className="flex w-[280px] flex-col items-center pt-[10px]">
        <svg width="72" height="72" viewBox="0 0 72 72" fill="none" stroke="#666" strokeWidth="4" className="overflow-visible">
          {icon}
        </svg>
        <span className="mt-[22px] text-[41px]">{label}</span>
      </div>
    ))}
  </div>
);

export default function App() {
  return (
    <div className="h-[3200px] w-[1440px] overflow-hidden bg-white font-[Roboto,'Noto_Sans_CJK_SC',sans-serif]">
      <StatusBar />
      <Header />
      <Banner />
      <Quote />
      <PeriodTabs />
      <div className="-mt-px">
        <AverageRow />
      </div>
      <div className="relative">
        <CandleChart />
        <ChartButtons />
        <PriceLabels />
        <Drawing />
      </div>
      <VolumeRow />
      <VolumeChart />
      <RangeSlider />
      <Notice />
      <SectionTabs />
      <div className="flex h-[352px] gap-[23px] pl-[43px] pt-[14px]">
        <RankCard />
        <VsCard />
      </div>
      <FeedHeader />
      <BottomNav />
      <div className="flex h-[56px] bg-black pl-[451px] pt-[22px]">
        <span className="h-[13px] w-[532px] rounded-full bg-[#b4b0b3]" />
      </div>
    </div>
  );
}
